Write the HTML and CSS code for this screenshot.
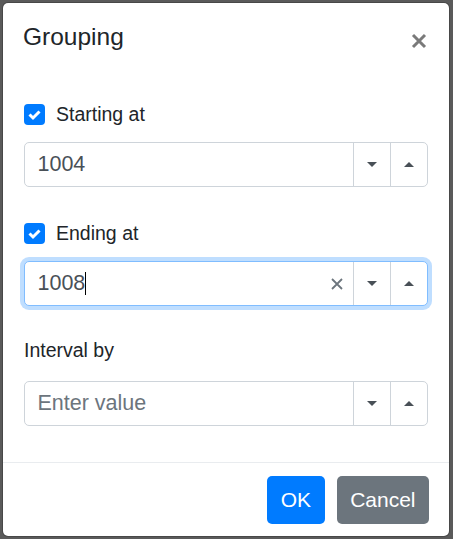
FILE: index.html
```html
<!DOCTYPE html>
<html lang="en">
<head>
    <meta charset="UTF-8">
    <meta name="viewport" content="width=device-width, initial-scale=1.0">
    <title>Grouping</title>
    <link rel="stylesheet" href="styles.css">
</head>
<body>
    <div class="modal">
        <div class="modal-header">
            <h5 class="modal-title">Grouping</h5>
            <button class="close" type="button" aria-label="Close">
                <svg width="16" height="16" viewBox="0 0 16 16">
                    <path d="M2 2 L14 14 M14 2 L2 14" stroke="currentColor" stroke-width="3"/>
                </svg>
            </button>
        </div>

        <div class="modal-body">
            <div class="form-group">
                <label class="check-row">
                    <span class="check-box">
                        <svg width="21" height="21" viewBox="0 0 21 21">
                            <path d="M5.5 10.5 L9 14 L15.5 7.5" fill="none" stroke="#fff" stroke-width="3"/>
                        </svg>
                    </span>
                    Starting at
                </label>
                <div class="spin">
                    <div class="spin-value">1004</div>
                    <span class="spin-btn"><span class="caret-down"></span></span>
                    <span class="spin-btn"><span class="caret-up"></span></span>
                </div>
            </div>

            <div class="form-group">
                <label class="check-row">
                    <span class="check-box">
                        <svg width="21" height="21" viewBox="0 0 21 21">
                            <path d="M5.5 10.5 L9 14 L15.5 7.5" fill="none" stroke="#fff" stroke-width="3"/>
                        </svg>
                    </span>
                    Ending at
                </label>
                <div class="spin focused">
                    <div class="spin-value">1008<span class="text-caret"></span></div>
                    <span class="spin-clear">
                        <svg width="12" height="12" viewBox="0 0 12 12">
                            <path d="M1 1 L11 11 M11 1 L1 11" stroke="currentColor" stroke-width="1.8"/>
                        </svg>
                    </span>
                    <span class="spin-btn"><span class="caret-down"></span></span>
                    <span class="spin-btn"><span class="caret-up"></span></span>
                </div>
            </div>

            <div class="form-group last">
                <label class="field-label">Interval by</label>
                <div class="spin">
                    <div class="spin-value placeholder">Enter value</div>
                    <span class="spin-btn"><span class="caret-down"></span></span>
                    <span class="spin-btn"><span class="caret-up"></span></span>
                </div>
            </div>
        </div>

        <div class="modal-footer">
            <button class="btn btn-primary" type="button">OK</button>
            <button class="btn btn-secondary" type="button">Cancel</button>
        </div>
    </div>
</body>
</html>
```

FILE: styles.css
```css
body {
    margin: 0;
    padding: 2px 3px 3px 2px;
    background-color: #5a5a5a;
    font-family: "Liberation Sans", Arial, sans-serif;
    color: #212529;
}
.modal {
    width: 448px;
    box-sizing: border-box;
    background-color: #fff;
    background-clip: padding-box;
    border: 1px solid rgba(0,0,0,0.2);
    border-radius: 6px;
}
.modal-header {
    display: flex;
    justify-content: space-between;
    align-items: flex-start;
    padding: 16px 21px 0 20px;
}
.modal-title {
    margin: 0;
    font-size: 24.5px;
    font-weight: normal;
    line-height: 36px;
}
.close {
    margin: 14px 1px 0 0;
    padding: 0;
    border: none;
    background: none;
    color: #7a7a7a;
    line-height: 0;
    cursor: pointer;
}
.modal-body {
    padding: 41px 21px 36px;
}
.form-group {
    margin-bottom: 28px;
}
.form-group.last {
    margin-bottom: 0;
}
.check-row {
    display: flex;
    align-items: center;
    height: 29px;
    padding-top: 4px;
    margin-bottom: 13px;
    font-size: 19.5px;
}
.check-box {
    width: 21px;
    height: 21px;
    margin-right: 11px;
    background-color: #007bff;
    border-radius: 4px;
    line-height: 0;
}
.field-label {
    display: block;
    font-size: 19.5px;
    line-height: 29px;
    padding-top: 2px;
    margin-bottom: 16px;
}
.spin {
    display: flex;
    align-items: center;
    height: 45px;
    box-sizing: border-box;
    border: 1px solid #ced4da;
    border-radius: 5px;
    background: #fff;
}
.spin.focused {
    border-color: #80bdff;
    box-shadow: 0 0 0 4px rgba(0,123,255,0.25);
}
.spin-value {
    flex: 1;
    display: flex;
    align-items: center;
    padding-left: 12.5px;
    font-size: 21.5px;
    color: #495057;
}
.spin-value.placeholder {
    color: #6c757d;
}
.text-caret {
    width: 1px;
    height: 23px;
    background: #000;
}
.spin-clear {
    margin-right: 10px;
    color: #6c757d;
    line-height: 0;
}
.spin-btn {
    display: flex;
    align-items: center;
    justify-content: center;
    width: 36px;
    height: 100%;
    border-left: 1px solid #ced4da;
}
.caret-down, .caret-up {
    width: 0;
    height: 0;
    border-left: 5.5px solid transparent;
    border-right: 5.5px solid transparent;
}
.caret-down {
    border-top: 5px solid #495057;
}
.caret-up {
    border-bottom: 5px solid #495057;
}
.modal-footer {
    display: flex;
    justify-content: flex-end;
    gap: 12px;
    padding: 13px 20px 12px;
    border-top: 1px solid #e9ecef;
}
.btn {
    height: 48px;
    padding: 0 13.5px;
    border: none;
    border-radius: 5px;
    font-family: inherit;
    font-size: 21px;
    color: #fff;
    cursor: pointer;
}
.btn-primary {
    background-color: #007bff;
}
.btn-secondary {
    background-color: #6c757d;
}
```
